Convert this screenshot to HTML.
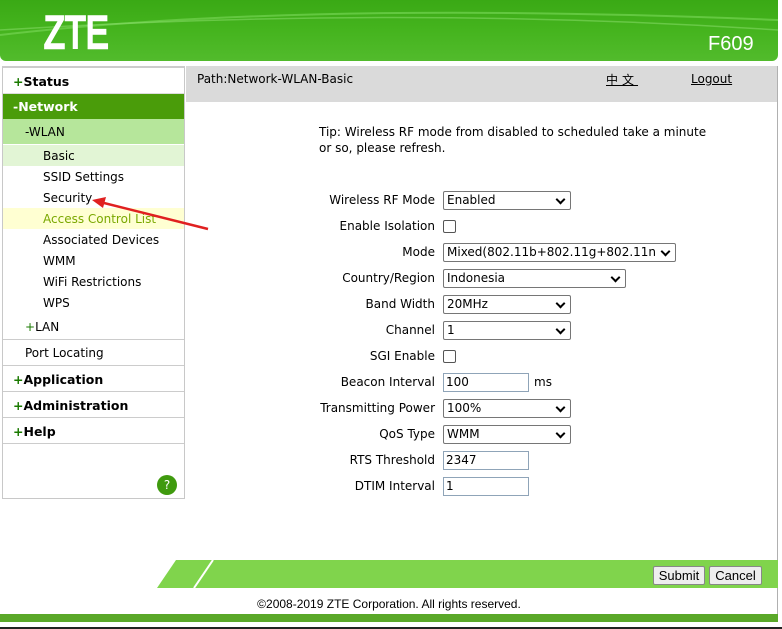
<!DOCTYPE html>
<html><head><meta charset="utf-8"><style>
*{margin:0;padding:0;box-sizing:border-box}
body{width:782px;height:629px;position:relative;background:#fff;font-family:"DejaVu Sans","Liberation Sans",sans-serif;font-size:12px;color:#000;overflow:hidden}
.a{position:absolute}
.hdr{left:0;top:0;width:778px;height:61px;background:linear-gradient(180deg,#3aa915 0%,#45b41e 50%,#52bb2c 100%);border-radius:0 0 6px 6px}
.menu{left:2px;top:66px;width:183px;height:433px;border:1px solid #c8c8c8;border-top:2px solid #ccc}
.m{position:absolute;left:0;width:181px}
.b{font-weight:bold;font-size:12.5px}
.pl{color:#1a7a00}
.lbl{position:absolute;right:347px;text-align:right;white-space:nowrap}
.sel{position:absolute;left:443px;height:19px;border:1px solid #767676;border-radius:2px;background:#fff;padding-left:3px;line-height:17px;white-space:nowrap;overflow:hidden}
.sel:after{content:"";position:absolute;right:6px;top:4px;width:5px;height:5px;border-right:2px solid #000;border-bottom:2px solid #000;transform:rotate(45deg)}
.inp{position:absolute;left:443px;width:86px;height:19px;border:1px solid #8fa4b8;padding-left:2px;line-height:17px}
.cb{position:absolute;left:443px;width:13px;height:13px;border:1px solid #555;border-radius:2px}
.btn{position:absolute;top:566px;height:19px;border:1px solid #888;background:#eee;font-family:"Liberation Sans",sans-serif;font-size:13px;line-height:17px;text-align:center;border-radius:2px}
</style></head><body>
<div class="a hdr"><svg width="778" height="61" style="position:absolute;left:0;top:0"><path d="M0 35 Q300 0 778 20" stroke="#7bd85a" stroke-width="2" fill="none" opacity=".6"/><path d="M0 30 Q400 5 778 30" stroke="#8ee070" stroke-width="1.5" fill="none" opacity=".5"/></svg></div>
<div class="a" style="left:44px;top:8px;color:#fff;font-family:'Liberation Sans',sans-serif;font-size:45px;line-height:50px;-webkit-text-stroke:2.5px #fff;transform:scaleX(0.76);transform-origin:0 0">ZTE</div>
<div class="a" style="left:708px;top:33px;color:#fff;font-family:'Liberation Sans',sans-serif;font-size:20px">F609</div>

<div class="a menu">
<div class="m b" style="top:0;height:26px;line-height:28px;padding-left:10px;border-bottom:1px solid #ddd"><span class="pl">+</span>Status</div>
<div class="m b" style="top:26px;height:25px;line-height:26px;padding-left:10px;background:#4a9c0a;color:#fff">-Network</div>
<div class="m" style="top:51px;height:25px;line-height:26px;padding-left:22px;background:#b6e69b">-WLAN</div>
<div class="m" style="top:77px;height:21px;line-height:23px;padding-left:40px;background:#e2f5d5">Basic</div>
<div class="m" style="top:98px;height:21px;line-height:23px;padding-left:40px">SSID Settings</div>
<div class="m" style="top:119px;height:21px;line-height:23px;padding-left:40px">Security</div>
<div class="m" style="top:140px;height:21px;line-height:23px;padding-left:40px;background:#ffffd2;color:#7aa800">Access Control List</div>
<div class="m" style="top:161px;height:21px;line-height:23px;padding-left:40px">Associated Devices</div>
<div class="m" style="top:182px;height:21px;line-height:23px;padding-left:40px">WMM</div>
<div class="m" style="top:203px;height:21px;line-height:23px;padding-left:40px">WiFi Restrictions</div>
<div class="m" style="top:224px;height:21px;line-height:23px;padding-left:40px">WPS</div>
<div class="m" style="top:246px;height:26px;line-height:27px;padding-left:22px;border-bottom:1px solid #ccc"><span class="pl">+</span>LAN</div>
<div class="m" style="top:272px;height:26px;line-height:27px;padding-left:22px;border-bottom:1px solid #ccc">Port Locating</div>
<div class="m b" style="top:298px;height:26px;line-height:27px;padding-left:10px;border-bottom:1px solid #ccc"><span class="pl">+</span>Application</div>
<div class="m b" style="top:324px;height:26px;line-height:27px;padding-left:10px;border-bottom:1px solid #ccc"><span class="pl">+</span>Administration</div>
<div class="m b" style="top:350px;height:26px;line-height:27px;padding-left:10px;border-bottom:1px solid #ccc"><span class="pl">+</span>Help</div>
<div style="position:absolute;left:154px;top:407px;width:20px;height:20px;border-radius:50%;background:#3f9a0e;color:#fff;text-align:center;line-height:20px;font-size:12px">?</div>
</div>

<div class="a" style="left:186px;top:66px;width:592px;height:36px;background:#dadada"></div>
<div class="a" style="left:777px;top:66px;width:1px;height:556px;background:#b0b0b0"></div>
<div class="a" style="left:197px;top:72px">Path:Network-WLAN-Basic</div>
<div class="a" style="left:606px;top:71px;text-decoration:underline;font-family:'Noto Sans CJK SC',sans-serif;font-size:12px;letter-spacing:4px">中文</div>
<div class="a" style="left:691px;top:72px;text-decoration:underline">Logout</div>
<div class="a" style="left:319px;top:124px;line-height:16px;width:398px">Tip: Wireless RF mode from disabled to scheduled take a minute or so, please refresh.</div>

<div class="lbl" style="top:193px">Wireless RF Mode</div><div class="sel" style="top:191px;width:128px">Enabled</div>
<div class="lbl" style="top:219px">Enable Isolation</div><div class="cb" style="top:220px"></div>
<div class="lbl" style="top:245px">Mode</div><div class="sel" style="top:243px;width:233px">Mixed(802.11b+802.11g+802.11n</div>
<div class="lbl" style="top:271px">Country/Region</div><div class="sel" style="top:269px;width:183px">Indonesia</div>
<div class="lbl" style="top:297px">Band Width</div><div class="sel" style="top:295px;width:128px">20MHz</div>
<div class="lbl" style="top:323px">Channel</div><div class="sel" style="top:321px;width:128px">1</div>
<div class="lbl" style="top:349px">SGI Enable</div><div class="cb" style="top:350px"></div>
<div class="lbl" style="top:375px">Beacon Interval</div><div class="inp" style="top:373px">100</div><div class="a" style="left:534px;top:375px">ms</div>
<div class="lbl" style="top:401px">Transmitting Power</div><div class="sel" style="top:399px;width:128px">100%</div>
<div class="lbl" style="top:427px">QoS Type</div><div class="sel" style="top:425px;width:128px">WMM</div>
<div class="lbl" style="top:453px">RTS Threshold</div><div class="inp" style="top:451px">2347</div>
<div class="lbl" style="top:479px">DTIM Interval</div><div class="inp" style="top:477px">1</div>

<svg class="a" style="left:150px;top:560px" width="628" height="28"><polygon points="7,28 26,0 628,0 628,28" fill="#80d44c"/><line x1="44" y1="28" x2="63" y2="0" stroke="#fff" stroke-width="2"/></svg>
<div class="btn" style="left:653px;width:52px">Submit</div>
<div class="btn" style="left:709px;width:53px">Cancel</div>
<div class="a" style="left:0;width:778px;top:597px;text-align:center;font-family:'Liberation Sans',sans-serif;font-size:12px">©2008-2019 ZTE Corporation. All rights reserved.</div>
<div class="a" style="left:0;top:614px;width:778px;height:8px;background:#5aa829"></div>
<div class="a" style="left:0;top:627px;width:782px;height:2px;background:#222"></div>

<svg class="a" style="left:0;top:0" width="782" height="629"><line x1="208" y1="229" x2="100" y2="202" stroke="#e02020" stroke-width="2.5"/><polygon points="92,200 106,197 103,208" fill="#e02020"/></svg>
</body></html>
